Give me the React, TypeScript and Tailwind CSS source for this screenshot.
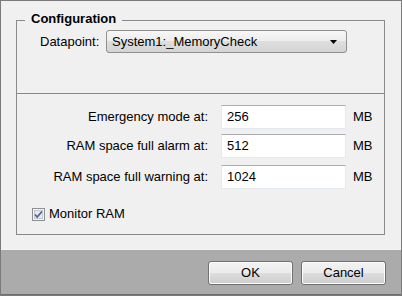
export default function App() {
  const rows = [
    { label: "Emergency mode at:", value: "256", mt: "mt-[11px]" },
    { label: "RAM space full alarm at:", value: "512", mt: "mt-[5px]" },
    { label: "RAM space full warning at:", value: "1024", mt: "mt-[7px]" },
  ];

  return (
    <div className="w-[402px] h-[296px] flex flex-col border border-[#7a7a7a] bg-[#f0f0f0] text-[13px] leading-[16px] text-black font-['Liberation_Sans',Arial,sans-serif]">
      <div className="flex-1 pl-[15px] pt-[19px]">
        <div className="relative w-[369px] h-[215px] border border-[#8a8a8a]">
          <span className="absolute left-[8px] -top-[10px] px-[6px] bg-[#f0f0f0] font-bold">Configuration</span>

          {/* datapoint */}
          <div className="flex items-center pt-[9px] pl-[23px]">
            <span className="w-[66px]">Datapoint:</span>
            <div className="w-[241px] h-[23px] flex items-center justify-between pl-[5px] pr-[9px] rounded-[3px] border border-[#8e8f8f] bg-[linear-gradient(#f7f7f7,#ececec_50%,#dedede_50%,#d4d4d4)]">
              <span>System1:_MemoryCheck</span>
              <svg width="7" height="4" viewBox="0 0 7 4">
                <path d="M0 0h7L3.5 4z" fill="#000" />
              </svg>
            </div>
          </div>

          <div className="mt-[40px] border-t border-[#8a8a8a]" />

          {rows.map((r) => (
            <div key={r.label} className={`flex items-center ${r.mt}`}>
              <span className="w-[191px] text-right">{r.label}</span>
              <div className="ml-[13px] w-[125px] h-[24px] flex items-center pl-[5px] bg-white border border-[#e3e9ef] border-t-[#abadb3]">
                {r.value}
              </div>
              <span className="ml-[7px]">MB</span>
            </div>
          ))}

          <div className="flex items-center mt-[17px] pl-[15px] gap-[4px]">
            <svg width="13" height="13" viewBox="0 0 13 13">
              <rect x="0.5" y="0.5" width="12" height="12" fill="#f4f4f4" stroke="#8e8f8f" />
              <rect x="2.5" y="2.5" width="8" height="8" fill="#e6e8ec" stroke="#c4c7cf" />
              <path d="M3 6.5l2.2 2.5L10 3.5" fill="none" stroke="#4a5f97" strokeWidth="1.6" />
            </svg>
            <span>Monitor RAM</span>
          </div>
        </div>
      </div>

      <div className="h-[46px] flex justify-end items-start pt-[11px] pr-[15px] gap-[8px] bg-[#ababab] border-t border-[#f4f4f4] border-b border-b-[#6e6e6e]">
        {["OK", "Cancel"].map((b) => (
          <button
            key={b}
            className="w-[85px] h-[24px] rounded-[3px] border border-[#707070] p-0"
          >
            <div className="h-full rounded-[2px] border border-[#fcfcfc] bg-[linear-gradient(#f2f2f2,#ebebeb_50%,#dddddd_50%,#cfcfcf)] flex items-center justify-center">
              {b}
            </div>
          </button>
        ))}
      </div>
    </div>
  );
}
